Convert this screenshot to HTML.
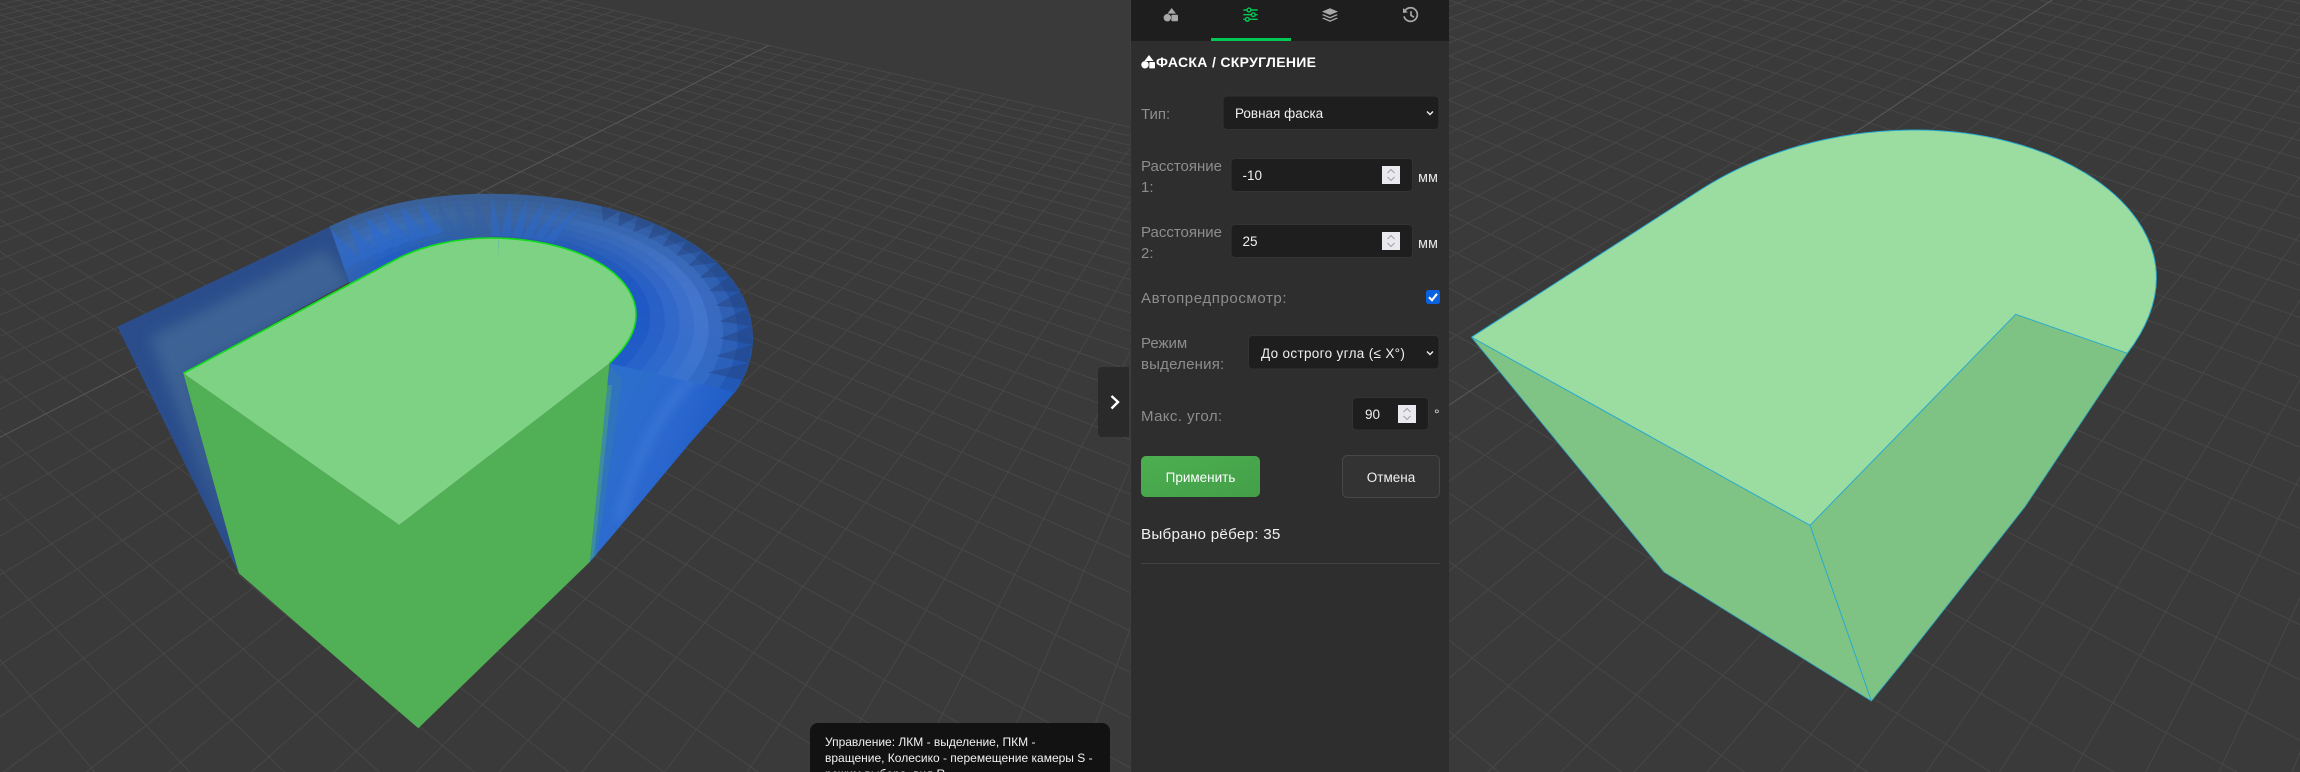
<!DOCTYPE html>
<html lang="ru"><head><meta charset="utf-8"><title>Фаска / скругление</title>
<style>
html,body{margin:0;padding:0;background:#3a3a3a;width:2300px;height:772px;overflow:hidden}
svg{position:absolute;left:0;top:0;display:block}
text{font-family:"Liberation Sans","Noto Sans CJK SC",sans-serif}
.l{fill:#8d8d8d;font-size:15px}
.v{fill:#f0f0f0;font-size:13.5px}
.tip{fill:#f2f2f2;font-size:12px}
</style></head><body>
<svg id="s" width="2300" height="772" viewBox="0 0 2300 772" xmlns="http://www.w3.org/2000/svg">
<defs>
<clipPath id="cl"><rect x="0" y="0" width="1131" height="772"/></clipPath>
<clipPath id="cr"><rect x="1448" y="0" width="852" height="772"/></clipPath>
<clipPath id="band"><polygon points="117.3,326.7 329.8,226.7 349.3,281.7 183.3,373.3 238.8,573.3"/></clipPath>
<clipPath id="lrc"><polygon points="609.5,363.3 735,392 728,400 690,443 640,503 590,561.7"/></clipPath>
<filter id="bl" x="-20%" y="-20%" width="140%" height="140%"><feGaussianBlur stdDeviation="7"/></filter>
<filter id="bl2" x="-50%" y="-50%" width="200%" height="200%"><feGaussianBlur stdDeviation="5"/></filter>
<linearGradient id="lr" gradientUnits="userSpaceOnUse" x1="605" y1="440" x2="700" y2="480">
<stop offset="0" stop-color="#2b6ecb"/><stop offset=".45" stop-color="#2d6ad0"/><stop offset="1" stop-color="#1f5cc6"/></linearGradient>
<linearGradient id="ap" x1="0" y1="0" x2="1" y2="1"><stop offset="0" stop-color="#4caf50"/><stop offset="1" stop-color="#439f48"/></linearGradient>
</defs>
<rect width="2300" height="772" fill="#3a3a3a"/>
<g id="gl" clip-path="url(#cl)" fill="none"></g>
<g id="gr" clip-path="url(#cr)" fill="none"></g>

<!-- left object -->
<polygon points="117.3,326.7 329.8,226.7 349.3,281.7 183.3,373.3 238.8,573.3" fill="#2b4d8b"/>
<g clip-path="url(#band)"><polygon points="150,338 325,250 352,285 188,372 232,540" fill="#3d6395" filter="url(#bl)"/></g>
<g id="mesh"></g>
<polygon points="609.5,363.3 735,392 728,400 690,443 640,503 590,561.7" fill="url(#lr)"/>
<g clip-path="url(#lrc)"><path d="M700,372C668,400 640,440 618,520" fill="none" stroke="#3f7fd8" stroke-width="10" opacity=".55" filter="url(#bl2)"/></g>
<polygon points="609.5,363.3 622,380 597,554 590,561.7" fill="#2f74bd"/>
<polygon points="605,385 612,385 594,556 590.5,560" fill="#3f9199" opacity=".9"/>
<polygon points="238.8,573.3 183.3,373.3 399.2,525 609.5,363.3 590,561.7 418.3,728.3" fill="#51af56"/>
<path d="M183.3,373.3 L394.9,260 C420,246.5 455,238 490,238 C570,238 636,270 636,315 C636,333 625,348 609.5,363.3 L399.2,525 Z" fill="#7dd283"/>
<path d="M183.3,373.3 L394.9,260 C420,246.5 455,238 490,238 C570,238 636,270 636,315 C636,333 625,348 609.5,363.3" fill="none" stroke="#12dc1e" stroke-width="1.6"/>
<polygon points="498,240 499.2,240 498.6,258" fill="#6bbfa0"/>

<!-- right object -->
<polygon points="1471.5,337.2 1664,572 1871.4,701 1810,525.3" fill="#80c485"/>
<polygon points="1810,525.3 1871.4,701 1900,665.7 2025,506.7 2127.3,353.3 2015.7,314.3" fill="#7ec383"/>
<path d="M1471.5,337.2 L1701.8,189 C1760,152 1835,130 1915,130 C2048,130 2156.4,196 2156.4,278 C2156.4,305 2145,330 2127.3,353.3 L2015.7,314.3 L1810,525.3 Z" fill="#9bdda1"/>
<g fill="none" stroke="#27aacf" stroke-width="1">
<path d="M1471.5,337.2 L1701.8,189 C1760,152 1835,130 1915,130 C2048,130 2156.4,196 2156.4,278 C2156.4,305 2145,330 2127.3,353.3"/>
<path d="M1471.5,337.2L1810,525.3L2015.7,314.3L2127.3,353.3M1810,525.3L1871.4,701"/>
<path d="M1471.5,337.2L1664,572L1871.4,701L1900,665.7L2025,506.7L2127.3,353.3" stroke-opacity=".75"/>
</g>

<!-- panel -->
<rect x="1130" y="0" width="319" height="772" fill="#2e2e2e"/>
<rect x="1130" y="0" width="1" height="772" fill="#3e3e3e"/>
<rect x="1131" y="0" width="318" height="41" fill="#1e1e1e"/>
<rect x="1211" y="38" width="80" height="3" fill="#00c853"/>
<!-- tab icons -->
<g fill="#a8a8a8">
<polygon points="1171.7,8 1176,13.6 1167.4,13.6"/><circle cx="1167.3" cy="17.7" r="3.7"/><rect x="1171.4" y="14.7" width="6.6" height="6.6" rx="1"/>
<polygon points="1330,8.2 1338,11.6 1330,15 1322,11.6"/>
<path d="M1323.6,14.2L1330,17L1336.4,14.2L1338,15L1330,18.5L1322,15Z"/>
<path d="M1323.6,17.6L1330,20.4L1336.4,17.6L1338,18.4L1330,21.9L1322,18.4Z"/>
</g>
<g fill="none" stroke="#00c853" stroke-width="1.4">
<path d="M1243.3,10H1257.7M1243.3,14.7H1257.7M1243.3,19.3H1257.7"/>
<circle cx="1249" cy="10" r="1.9" fill="#1e1e1e"/><circle cx="1253.3" cy="14.7" r="1.9" fill="#1e1e1e"/><circle cx="1247.3" cy="19.3" r="1.9" fill="#1e1e1e"/>
</g>
<g fill="none" stroke="#a8a8a8" stroke-width="1.7">
<path d="M1405,10.6A6.8,6.8 0 1 1 1404,16.4"/>
<path d="M1411,11.2V15.4L1414,17.2"/>
</g>
<polygon points="1403,8 1407.8,12.4 1403,13" fill="#a8a8a8"/>
<!-- title -->
<g fill="#fff">
<polygon points="1149,55 1153.6,61 1144.4,61"/><circle cx="1145" cy="64.8" r="3.7"/><rect x="1149.3" y="62" width="5.7" height="6.4" rx=".8"/>
</g>
<text x="1156" y="67" font-size="14" font-weight="700" fill="#fff" letter-spacing=".32">ФАСКА / СКРУГЛЕНИЕ</text>

<text class="l" x="1141" y="119">Тип:</text>
<rect x="1223" y="96" width="216" height="33.5" rx="4" fill="#1e1e1e" stroke="#333"/>
<text class="v" x="1235" y="118">Ровная фаска</text>
<path d="M1427,111.5L1430,114.5L1433,111.5" fill="none" stroke="#eee" stroke-width="1.4"/>

<text class="l" x="1141" y="171">Расстояние</text><text class="l" x="1141" y="192">1:</text>
<rect x="1231" y="158.5" width="181.5" height="33" rx="4" fill="#1e1e1e" stroke="#333"/>
<text class="v" x="1242.5" y="180">-10</text>
<text x="1418" y="182" font-size="14.5" fill="#e4e4e4">мм</text>

<text class="l" x="1141" y="237">Расстояние</text><text class="l" x="1141" y="258">2:</text>
<rect x="1231" y="224.5" width="181.5" height="33" rx="4" fill="#1e1e1e" stroke="#333"/>
<text class="v" x="1242.5" y="246">25</text>
<text x="1418" y="248" font-size="14.5" fill="#e4e4e4">мм</text>

<text class="l" x="1141" y="303" letter-spacing=".6">Автопредпросмотр:</text>
<rect x="1426" y="290" width="14" height="14" rx="2.5" fill="#0b62e0"/>
<path d="M1429,297.2L1432,300.2L1437,293.8" fill="none" stroke="#fff" stroke-width="2.1"/>

<text class="l" x="1141" y="348">Режим</text><text class="l" x="1141" y="369" letter-spacing=".2">выделения:</text>
<rect x="1248.5" y="335.5" width="190.5" height="33.5" rx="4" fill="#1e1e1e" stroke="#333"/>
<text class="v" x="1261" y="358" letter-spacing=".33">До острого угла (≤ X°)</text>
<path d="M1427,351.5L1430,354.5L1433,351.5" fill="none" stroke="#eee" stroke-width="1.4"/>

<text class="l" x="1141" y="421" letter-spacing=".4">Макс. угол:</text>
<rect x="1352.5" y="397.5" width="76" height="32.5" rx="4" fill="#1e1e1e" stroke="#333"/>
<text class="v" x="1365" y="419">90</text>
<text x="1434" y="419" font-size="14" fill="#e4e4e4">°</text>

<g id="sp1"></g>

<rect x="1141" y="456" width="119" height="41" rx="5" fill="url(#ap)"/>
<text x="1200.5" y="482" font-size="13.5" fill="#fff" text-anchor="middle">Применить</text>
<rect x="1342.5" y="455.5" width="97" height="42" rx="5" fill="#333" stroke="#474747"/>
<text x="1391" y="482" font-size="13.5" fill="#f0f0f0" text-anchor="middle">Отмена</text>

<text x="1141" y="539" font-size="15.2" fill="#f0f0f0" letter-spacing=".25">Выбрано рёбер: 35</text>
<rect x="1141" y="563" width="299" height="1" fill="#424242"/>

<!-- collapse -->
<path d="M1129,367H1102a4,4 0 0 0 -4,4V433a4,4 0 0 0 4,4H1129Z" fill="#2a2a2a"/>
<path d="M1111.5,396L1118,402L1111.5,408.5" fill="none" stroke="#fff" stroke-width="2.4"/>

<!-- tooltip -->
<path d="M818,723H1102a8,8 0 0 1 8,8V772H810V731a8,8 0 0 1 8,-8Z" fill="#121212"/>
<text class="tip" x="825" y="746">Управление: ЛКМ - выделение, ПКМ -</text>
<text class="tip" x="825" y="762">вращение, Колесико - перемещение камеры S -</text>
<text class="tip" x="825" y="778">режим выбора, вид R -</text>
</svg>
<script>
(function(){
function E(id){return document.getElementById(id)}
function grid(g,vy,v1,v2,a1,d1,n0,n1,a2,d2,k0,k1){
 var h='',B=772;
 function W(X1,X2){return (v1-v2)/((X2-v2)-(X1-v1))}
 function line(v,X,w0,w1,c){var y0=vy+(B-vy)*w0,y1=vy+(B-vy)*w1,x0=v+(X-v)*w0,x1=v+(X-v)*w1;
  return '<line x1="'+x0.toFixed(1)+'" y1="'+y0.toFixed(1)+'" x2="'+x1.toFixed(1)+'" y2="'+y1.toFixed(1)+'" stroke="'+c+'" stroke-width="1"/>'}
 var Xf=a2+d2*k1;
 for(var k=k0;k<=k1;k++){var X=a2+d2*k;h+=line(v2,X,W(a1+d1*n0,X),1.06,'#474747')}
 for(var n=n0;n<=n1;n++){var X=a1+d1*n;if(n==0)continue;h+=line(v1,X,W(X,Xf),1.06,'#474747')}
 h+=line(v1,a1,W(a1,Xf),1.06,'#595959');
 g.innerHTML=h;
}
grid(E('gl'),-315,1476,-825,-657,82.6,-50,25,474,94.8,-7,37);
grid(E('gr'),-516,2820,-65,903,73.1,-30,25,1498.5,123,-2,42);

function bz(a,b,c,d,N){var o=[];for(var i=0;i<N;i++){var t=i/N,u=1-t;o.push([0,1].map(function(q){return u*u*u*a[q]+3*u*u*t*b[q]+3*u*t*t*c[q]+t*t*t*d[q]}))}return o}
function ps(a){return a.map(function(p){return p[0].toFixed(1)+','+p[1].toFixed(1)}).join(' ')}
var S=24;
var I=bz([349.3,281.7],[395,258],[440,238],[490,238],S).concat(bz([490,238],[570,238],[636,270],[636,315],S),bz([636,315],[636,333],[625,348],[609.5,363.3],S),[[609.5,363.3]]);
var O=bz([329.8,226.7],[375,205],[430,194],[490,194],S).concat(bz([490,194],[640,194],[752.6,255],[752.6,338],S),bz([752.6,338],[752.6,358],[746,375],[735,392],S),[[735,392]]);
var L=I.length-1;
var st=[0,.1,.22,.33,.42,.6,1];
var CI=[[48,98,180],[30,90,195],[40,95,175],[55,95,155],[38,90,180],[27,85,195],[30,90,200]];
var CM=[[60,105,170],[58,112,192],[60,106,165],[60,100,155],[58,106,180],[68,118,205],[58,116,208]];
var CO=[[55,95,150],[58,95,150],[58,95,150],[58,95,148],[50,90,150],[32,80,160],[30,85,180]];
function pick(T,s){for(var i=0;i<st.length-1;i++){if(s<=st[i+1]){var u=(s-st[i])/(st[i+1]-st[i]);return T[i].map(function(v,q){return v+(T[i+1][q]-v)*u})}}return T[T.length-1]}
function col(s,r){var a,b,u;if(r<.55){a=pick(CI,s);b=pick(CM,s);u=r/.55}else{a=pick(CM,s);b=pick(CO,s);u=(r-.55)/.45}
 return 'rgb('+a.map(function(v,q){return Math.round(v+(b[q]-v)*u)}).join(',')+')'}
function P(i,r){var a=I[i],b=O[i];return [a[0]+(b[0]-a[0])*r,a[1]+(b[1]-a[1])*r]}
var h='',R=8;
for(var i=0;i<L;i++){for(var j=0;j<R;j++){var c=col((i+.5)/L,(j+.5)/R),r0=j==0?-.08:j/R,r1=(j+1)/R;
 h+='<polygon points="'+ps([P(i,r0),P(i+1,r0),P(i+1,r1),P(i,r1)])+'" fill="'+c+'" stroke="'+c+'" stroke-width=".6"/>'}}
var len=[0];for(var i=1;i<=L;i++){len[i]=len[i-1]+Math.hypot(O[i][0]-O[i-1][0],O[i][1]-O[i-1][1])}
function sAt(d){for(var i=1;i<=L;i++){if(len[i]>=d){return (i-1+(d-len[i-1])/(len[i]-len[i-1]))/L}}return 1}
function Q(s,r){var x=s*L,i=Math.min(Math.floor(x),L-1),f=x-i,a=P(i,r),b=P(i+1,r);return [a[0]+(b[0]-a[0])*f,a[1]+(b[1]-a[1])*f]}
var step=18.5;
for(var d=0;d+step<=len[L];d+=step){var s0=sAt(d),s1=sAt(d+step),t;
 if(s0<.22){t=[Q(s0,.96),Q(s1,.25),Q(s0,.2)];h+='<polygon points="'+ps(t)+'" fill="rgb(45,105,205)" fill-opacity=".6"/>'}
 else if(s0<.33){t=[Q(s0,.98),Q(s1,.1),Q(s0,.1)];h+='<polygon points="'+ps(t)+'" fill="rgb(50,95,165)" fill-opacity=".4"/>'}
 else if(s0<.42){t=[Q(s0,.95),Q(s1,.05),Q(s0,.05)];h+='<polygon points="'+ps(t)+'" fill="rgb(45,105,200)" fill-opacity=".6"/>'}
 else{t=[Q(s0,1),Q(s1,1),Q(s1,.72)];h+='<polygon points="'+ps(t)+'" fill="rgb(38,62,118)" fill-opacity=".4"/>'}
}
E('mesh').innerHTML=h;

function spin(x,y){return '<rect x="'+x+'" y="'+y+'" width="18" height="18" fill="#e9e9ef"/><path d="M'+(x+5.5)+','+(y+7)+'l3.5,-3.5l3.5,3.5M'+(x+5.5)+','+(y+11)+'l3.5,3.5l3.5,-3.5" fill="none" stroke="#a2a2a8" stroke-width="1.1"/>'}
E('sp1').innerHTML=spin(1382,166)+spin(1382,232)+spin(1398,405);
})();
</script>
</body></html>
